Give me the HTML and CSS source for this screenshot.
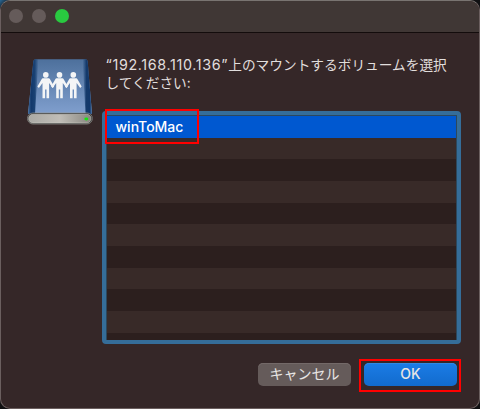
FILE: index.html
```html
<!DOCTYPE html>
<html lang="ja">
<head>
<meta charset="utf-8">
<title>ボリュームの選択</title>
<link rel="stylesheet" href="styles.css">
</head>
<body>
<div class="window">
  <header class="titlebar">
    <span class="light"></span><span class="light"></span><span class="light zoom"></span>
  </header>
  <main class="content">
    <svg class="drive" width="66" height="66" viewBox="0 0 66 66">
      <defs>
        <linearGradient id="face" x1="0" y1="0" x2="0" y2="1"><stop offset="0" stop-color="#4d709c"/><stop offset="1" stop-color="#809fce"/></linearGradient>
        <linearGradient id="left"><stop offset="0" stop-color="#466f9e"/><stop offset=".3" stop-color="#12386b"/><stop offset=".65" stop-color="#1a4274"/><stop offset="1" stop-color="#1a4274" stop-opacity="0"/></linearGradient>
        <linearGradient id="right"><stop offset="0" stop-color="#1a4274" stop-opacity="0"/><stop offset=".4" stop-color="#153a6b"/><stop offset=".75" stop-color="#12386b"/><stop offset="1" stop-color="#466f9e"/></linearGradient>
        <linearGradient id="base"><stop offset="0" stop-color="#aaa9a4"/><stop offset=".5" stop-color="#c0bdb7"/><stop offset="1" stop-color="#898780"/></linearGradient>
        <g id="person">
          <circle cx="0" cy="15.9" r="2.8"/>
          <path d="M-3 19.3h6q.7 0 1.2 1l4.2 7.3-1.5 1.3-3.6-4.9v15.2H.7v-8.8H-.7v8.8h-2.6V24l-3.6 4.9-1.5-1.3 4.2-7.3q.5-1 1.2-1z"/>
        </g>
      </defs>
      <path d="M6.4 2Q6.8.3 8.5.3h50Q60.2.3 60.6 2l4.4 53H1z" fill="url(#face)"/>
      <path d="M6.4 2Q6.8.3 8.5.3h3L8 55H1z" fill="url(#left)"/>
      <path d="M60.6 2Q60.2.3 58.5.3h-3L58.5 55H65z" fill="url(#right)"/>
      <g fill="#f4f5f6"><use href="#person" x="18.8"/><use href="#person" x="32.5"/><use href="#person" x="46.3"/></g>
      <rect x=".5" y="54" width="64.8" height="11" rx="5.3" fill="#292a2b" stroke="#969690" stroke-width=".7"/>
      <rect x="1.6" y="55.3" width="62.4" height="8.7" rx="4.2" fill="url(#base)" stroke="#d2d0c9" stroke-width=".5"/>
      <ellipse cx="59.3" cy="60" rx="2" ry="1.4" fill="#15e512"/>
    </svg>
    <p class="message"><span class="address">“192.168.110.136”</span>上のマウントするボリュームを選択<br>してください:</p>
    <div class="list">
      <div class="row selected">winToMac</div>
      <div class="row"></div><div class="row"></div><div class="row"></div><div class="row"></div>
      <div class="row"></div><div class="row"></div><div class="row"></div><div class="row"></div>
      <div class="row"></div><div class="row"></div>
    </div>
  </main>
  <footer class="actions">
    <button class="button">キャンセル</button>
    <button class="button primary">OK</button>
  </footer>
</div>
<div class="highlight item"></div>
<div class="highlight confirm"></div>
</body>
</html>
```
FILE: styles.css
```css
* { box-sizing: border-box; }
body {
  margin: 0;
  width: 480px;
  height: 409px;
  overflow: hidden;
  position: relative;
  background: linear-gradient(135deg, #286896 0, #1c354a 5px, #101012 7px);
  font-family: Inter, "Noto Sans CJK JP", sans-serif;
  color: #e1dedd;
}
.window {
  width: 480px;
  height: 409px;
  border: 1px solid #6b5f5f;
  border-top-color: #797471;
  border-radius: 10px;
  background: #352728;
  overflow: hidden;
}
.titlebar {
  height: 32px;
  display: flex;
  align-items: center;
  gap: 9px;
  padding: 0 8px 2px;
  background: #403735;
  border-bottom: 1px solid #130c0c;
}
.light { width: 14px; height: 14px; border-radius: 50%; background: #655b5a; }
.zoom { background: #29c940; }
.content {
  display: grid;
  grid-template-columns: 75px 359px;
  grid-template-rows: 55px 233px;
  padding: 23px 0 0 25.5px;
}
.drive { margin-top: 3px; grid-row: 1 / 3; }
.message {
  margin: 0 0 0 4px;
  font-size: 13.7px;
  line-height: 18px;
  white-space: nowrap;
}
.address { font-size: 14.3px; letter-spacing: 0.65px; line-height: 1; }
.list {
  grid-column: 2;
  height: 233px;
  border: 4px solid #356d99;
  border-radius: 4px;
  box-shadow: inset 0 0 0 1px #2c485d;
  overflow: hidden;
  padding: 1px 0.5px 0 1px;
}
.row { height: 21.66px; background: #2c1f1e; }
.row:nth-child(even) { background: #382a28; }
.row.selected {
  padding-left: 9px;
  background: #0058d0;
  color: #fff;
  font-size: 14px;
  font-weight: 500;
  line-height: 21px;
}
.actions {
  display: flex;
  justify-content: flex-end;
  gap: 13px;
  padding: 19px 22px 0 0;
}
.button {
  width: 93px;
  height: 23px;
  padding: 0 0 2px;
  border: 0;
  border-radius: 5px;
  background: #655b5a;
  box-shadow: inset 0 1px #736968;
  color: #e8e5e4;
  font: 14px/21px Inter, "Noto Sans CJK JP", sans-serif;
}
.primary { background: linear-gradient(#1b7ce6, #126bcd); box-shadow: inset 0 1px #3188e5; font-weight: 500; }
.highlight { position: absolute; border: 2px solid #ff0000; }
.item { left: 105px; top: 109px; width: 94px; height: 35px; }
.confirm { left: 359px; top: 359px; width: 102px; height: 33px; }
```
